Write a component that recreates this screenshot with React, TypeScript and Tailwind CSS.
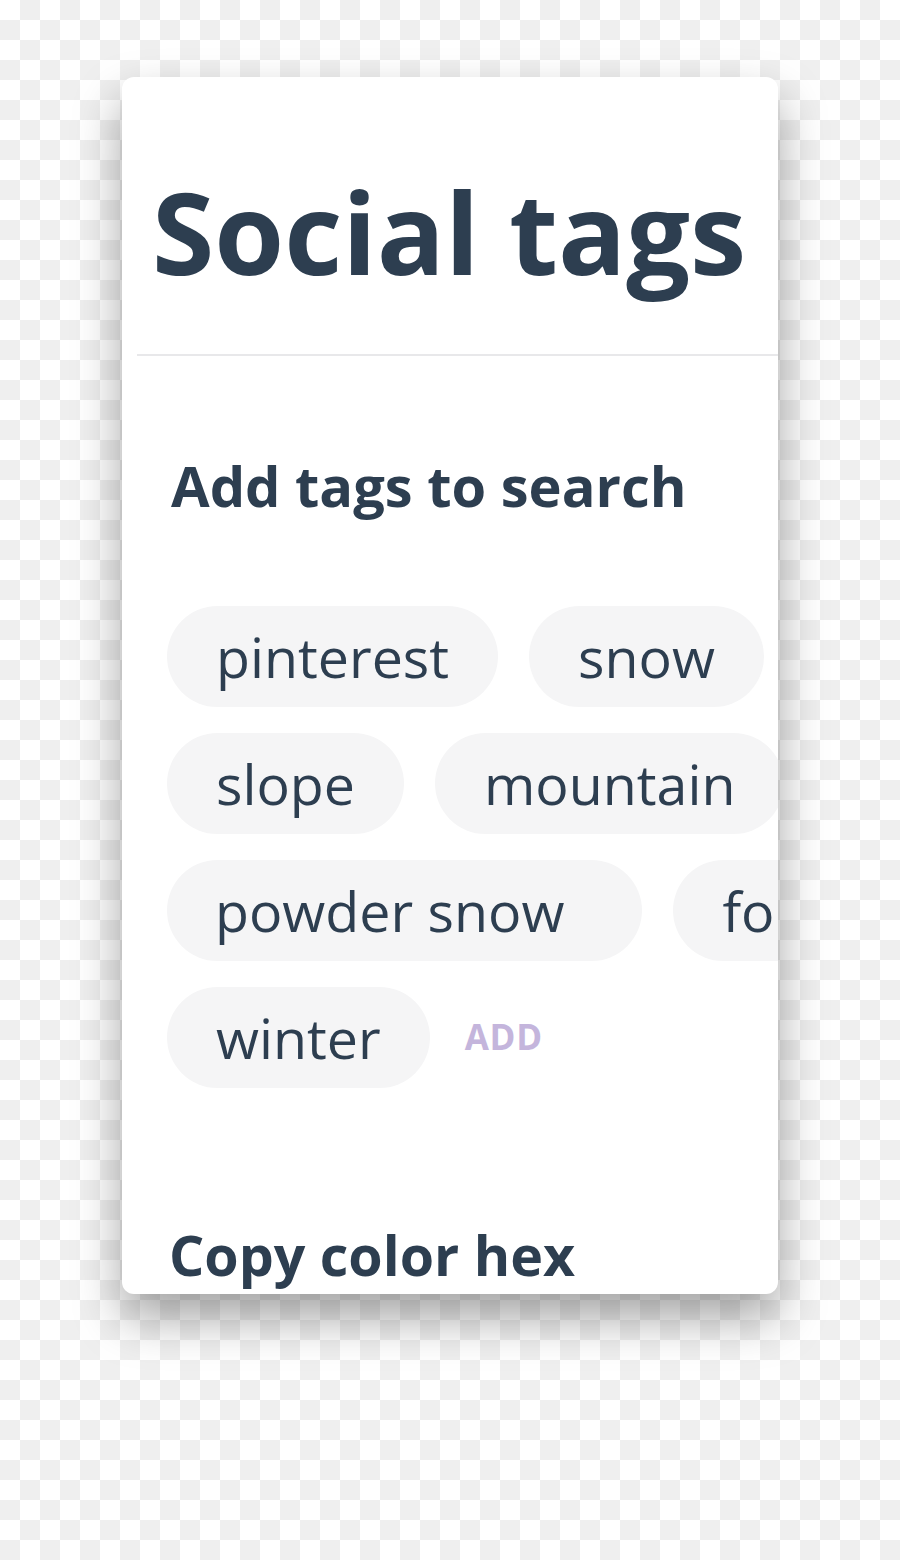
const TAGS = ['pinterest', 'snow', 'slope', 'mountain', 'powder snow', 'forest', 'winter'];

const font = { fontFamily: '"Open Sans", "Noto Sans", sans-serif' };

function Tag({ label }: { label: string }) {
  // the long tag carries a wider right pad in the reference
  const wide = label === 'powder snow';
  return (
    <span
      className={
        wide
          ? 'inline-flex h-[101px] shrink-0 items-center rounded-full bg-[#f5f5f6] pl-[48px] pr-[78px] text-[55.5px] leading-[101px] text-[#2d3e50]'
          : 'inline-flex h-[101px] shrink-0 items-center rounded-full bg-[#f5f5f6] px-[49px] text-[55.5px] leading-[101px] text-[#2d3e50]'
      }
    >
      {label}
    </span>
  );
}

export default function App() {
  return (
    <div
      className="min-h-[1560px] w-full bg-[conic-gradient(#efefef_25%,#ffffff_0_50%,#efefef_0_75%,#ffffff_0)] bg-[length:40px_40px] pt-[77px] pl-[122px]"
      style={font}
    >
      <div className="h-[1217px] w-[656px] overflow-hidden rounded-xl bg-white shadow-[0_24px_48px_rgba(0,0,0,0.36)]">
        <h1 className="pl-[30px] pt-[98px] text-[113px] font-bold leading-[113px] whitespace-nowrap text-[#2d3e50]">
          Social tags
        </h1>
        <div className="ml-[15px] mt-[66px] h-[2px] bg-[#e8e8ea]" />

        <div className="pl-[49px]">
          <h2 className="mt-[101px] text-[56px] font-bold leading-[57px] whitespace-nowrap text-[#2d3e50]">
            Add tags to search
          </h2>

          <div className="mt-[92px] -ml-[4px] flex w-[800px] flex-wrap items-center gap-x-[31px] gap-y-[26px]">
            {TAGS.map((t) => (
              <Tag key={t} label={t} />
            ))}
            <span className="ml-[4px] text-[35px] font-bold tracking-[0.02em] text-[#c4b5dc]">ADD</span>
          </div>

          <h2 className="mt-[138px] -ml-[2px] text-[55.5px] font-bold leading-[57px] whitespace-nowrap text-[#2d3e50]">
            Copy color hex
          </h2>
        </div>
      </div>
    </div>
  );
}
